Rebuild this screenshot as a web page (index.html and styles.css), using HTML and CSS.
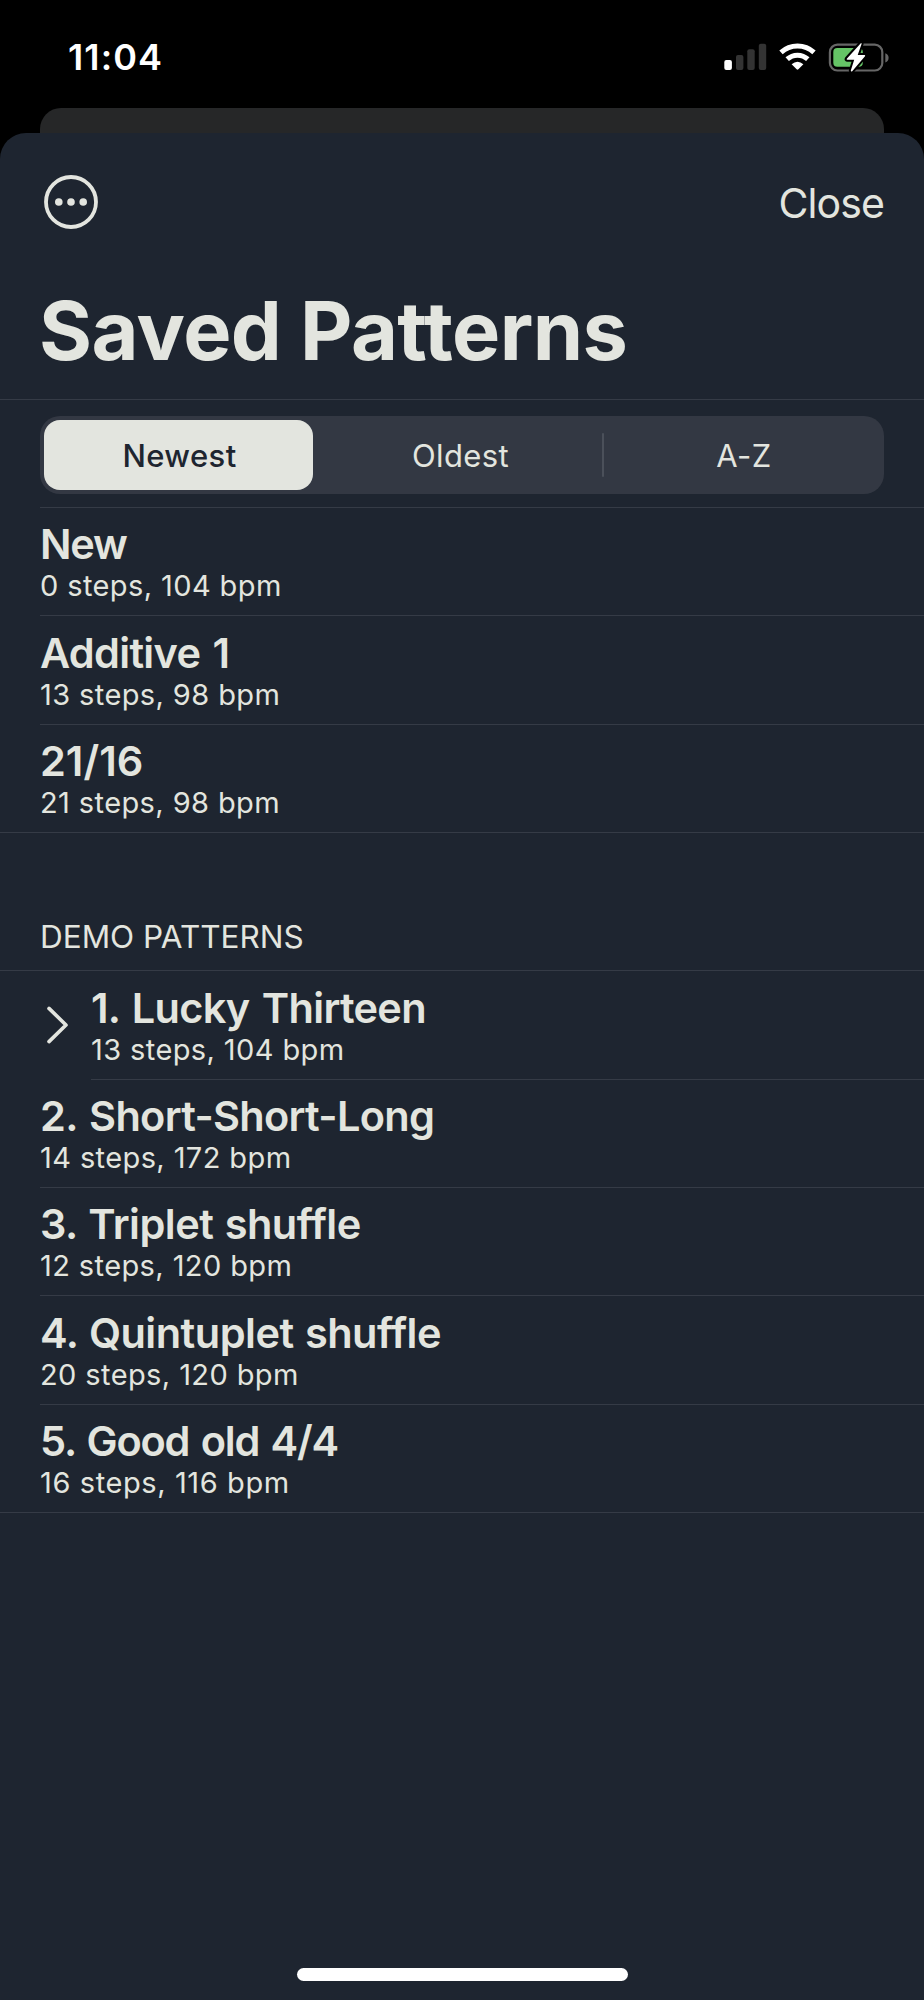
FILE: index.html
```html
<!DOCTYPE html>
<html lang="en">
<head>
<meta charset="utf-8">
<title>Saved Patterns</title>
<link rel="stylesheet" href="styles.css">
</head>
<body>
<div class="screen">
  <header class="status">
    <time class="clock">11:04</time>
    <svg class="indicators" width="170" height="34" viewBox="720 40 170 34" aria-hidden="true">
      <rect x="724.3" y="60" width="7.6" height="10" rx="2" fill="#fff"/>
      <g fill="#333">
        <rect x="736" y="55" width="7.4" height="15" rx="2"/>
        <rect x="747.3" y="49.3" width="7.4" height="20.7" rx="2"/>
        <rect x="758.8" y="43.8" width="7.4" height="26.2" rx="2"/>
      </g>
      <g fill="none" stroke="#fff" stroke-width="5">
        <path d="M781 52.3A24.4 24.4 0 0 1 814 52.3"/>
        <path d="M787.2 59.2A15.2 15.2 0 0 1 807.8 59.2"/>
      </g>
      <path d="M791.6 64.2Q797.5 59.2 803.4 64.2L798.4 69.3Q797.5 70.2 796.6 69.3Z" fill="#fff"/>
      <rect x="829.9" y="44.7" width="52.4" height="25.8" rx="7.5" fill="none" stroke="#666" stroke-width="2.2"/>
      <path d="M885.3 53.2Q888.6 54.2 888.6 57.8Q888.6 61.4 885.3 62.4Z" fill="#666"/>
      <rect x="833.3" y="48" width="29.5" height="18.8" rx="4" fill="#65c466"/>
      <path d="M860.8 43.2L846.8 58.7Q846.2 59.8 847.5 59.8H854.2L850.8 70.5Q851 72.2 852.2 71.2L865 56.2Q865.6 55 864.4 55H857.7L861.5 44.2Q861.8 42.7 860.8 43.2Z" fill="#fff" stroke="#000" stroke-width="4" stroke-linejoin="round" paint-order="stroke"/>
    </svg>
  </header>
  <div class="back-card"></div>
  <main class="sheet">
    <nav class="toolbar">
      <svg width="54" height="54" viewBox="0 0 54 54" role="img" aria-label="More">
        <circle cx="27" cy="27" r="25" fill="none" stroke="#e3e5df" stroke-width="3.8"/>
        <g fill="#e3e5df"><circle cx="14.8" cy="27" r="3.8"/><circle cx="27" cy="27" r="3.8"/><circle cx="39.2" cy="27" r="3.8"/></g>
      </svg>
      <span class="close">Close</span>
    </nav>
    <h1 class="title">Saved Patterns</h1>
    <div class="filter">
      <div class="segments">
        <span class="segment selected">Newest</span>
        <span class="segment">Oldest</span>
        <span class="segment last">A-Z</span>
      </div>
    </div>
    <ul class="list">
      <li class="row"><b class="name short">New</b><span class="meta">0 steps, 104 bpm</span></li>
      <li class="row"><b class="name">Additive 1</b><span class="meta">13 steps, 98 bpm</span></li>
      <li class="row"><b class="name numeric">21/16</b><span class="meta">21 steps, 98 bpm</span></li>
    </ul>
    <h2 class="section">DEMO PATTERNS</h2>
    <ul class="list demo">
      <li class="row current">
        <svg class="chevron" width="24" height="40" viewBox="0 0 24 40" aria-hidden="true"><path d="M3 3.4L20 20L3 36.6" fill="none" stroke="#e3e5df" stroke-width="3.6" stroke-linecap="round" stroke-linejoin="round"/></svg>
        <b class="name">1. Lucky Thirteen</b><span class="meta">13 steps, 104 bpm</span>
      </li>
      <li class="row plain"><b class="name">2. Short-Short-Long</b><span class="meta">14 steps, 172 bpm</span></li>
      <li class="row"><b class="name wide">3. Triplet shuffle</b><span class="meta">12 steps, 120 bpm</span></li>
      <li class="row"><b class="name wide">4. Quintuplet shuffle</b><span class="meta">20 steps, 120 bpm</span></li>
      <li class="row"><b class="name tight">5. Good old 4/4</b><span class="meta loose">16 steps, 116 bpm</span></li>
    </ul>
    <div class="home-bar"></div>
  </main>
</div>
</body>
</html>
```
FILE: styles.css
```css
* { box-sizing: border-box; }
body {
  margin: 0;
  background: #000;
  color: #e3e5df;
  font-family: Inter, "Liberation Sans", sans-serif;
}
.screen { display: flex; flex-direction: column; width: 924px; height: 2000px; }
.status {
  display: flex;
  justify-content: space-between;
  height: 108.4px;
  padding: 40px 34px 0 68px;
}
.clock { color: #fff; font-size: 36px; font-weight: 600; line-height: 35px; letter-spacing: 1.1px; }
.back-card { flex: none; height: 24.9px; margin: 0 40px; border-radius: 21px 21px 0 0; background: #262728; }
.sheet {
  display: flex;
  flex: 1;
  flex-direction: column;
  border-radius: 26px 26px 0 0;
  background: #1e2530;
}
.toolbar {
  display: flex;
  justify-content: space-between;
  height: 130px;
  padding: 42px 40px 0 44px;
}
.close { font-size: 41px; line-height: 56px; letter-spacing: -.9px; }
.title {
  height: 136px;
  margin: 0;
  padding: 18px 0 0 39px;
  font-size: 81px;
  font-weight: 700;
  line-height: 100px;
  letter-spacing: -.55px;
}
.filter { height: 107.7px; padding: 16px 40px 0; border-top: 1px solid #353b46; }
.segments {
  display: grid;
  grid-template-columns: 269px 289px 278px;
  height: 78px;
  padding: 4px;
  border-radius: 20px;
  background: #333843;
}
.segment {
  display: flex;
  align-items: center;
  justify-content: center;
  padding-left: 6px;
  font-size: 31px;
  letter-spacing: .4px;
}
.segment.selected { padding-left: 2px; border-radius: 16px; background: #e3e5df; color: #1e2530; font-weight: 500; }
.segment.last { position: relative; }
.segment.last::before {
  content: "";
  position: absolute;
  top: 13px;
  left: 0;
  width: 2px;
  height: 44px;
  border-radius: 1px;
  background: #4b505a;
}
.list { margin: 0; padding: 0; border-bottom: 1px solid #353b46; list-style: none; }
.row {
  display: flex;
  flex-direction: column;
  height: 108.3px;
  margin-left: 40px;
  padding-top: 11.4px;
  border-top: 1px solid #353b46;
}
.name { font-size: 41.5px; font-weight: 600; line-height: 50px; letter-spacing: -.7px; word-spacing: 2.5px; }
.name.short { letter-spacing: -1.2px; }
.name.numeric { letter-spacing: 0; }
.name.wide { letter-spacing: -.5px; word-spacing: 1.3px; }
.name.tight { letter-spacing: -1.2px; word-spacing: 2.2px; }
.meta { font-size: 29px; line-height: 34px; letter-spacing: .4px; }
.meta.loose { letter-spacing: .6px; }
.section { height: 137.6px; margin: 0; padding: 83.4px 0 0 40px; font-size: 31.5px; font-weight: 400; line-height: 42px; }
.demo { border-top: 1px solid #353b46; }
.current { position: relative; height: 107.3px; margin-left: 91px; border-top: 0; }
.row.plain { border-top: 0; padding-top: 12.4px; background: linear-gradient(#353b46, #353b46) 51px 0 / 100% 1px no-repeat; }
.chevron { position: absolute; top: 34px; left: -45px; }
.home-bar { width: 331px; height: 13px; margin: auto auto 19px 297px; border-radius: 7px; background: #fff; }
```
